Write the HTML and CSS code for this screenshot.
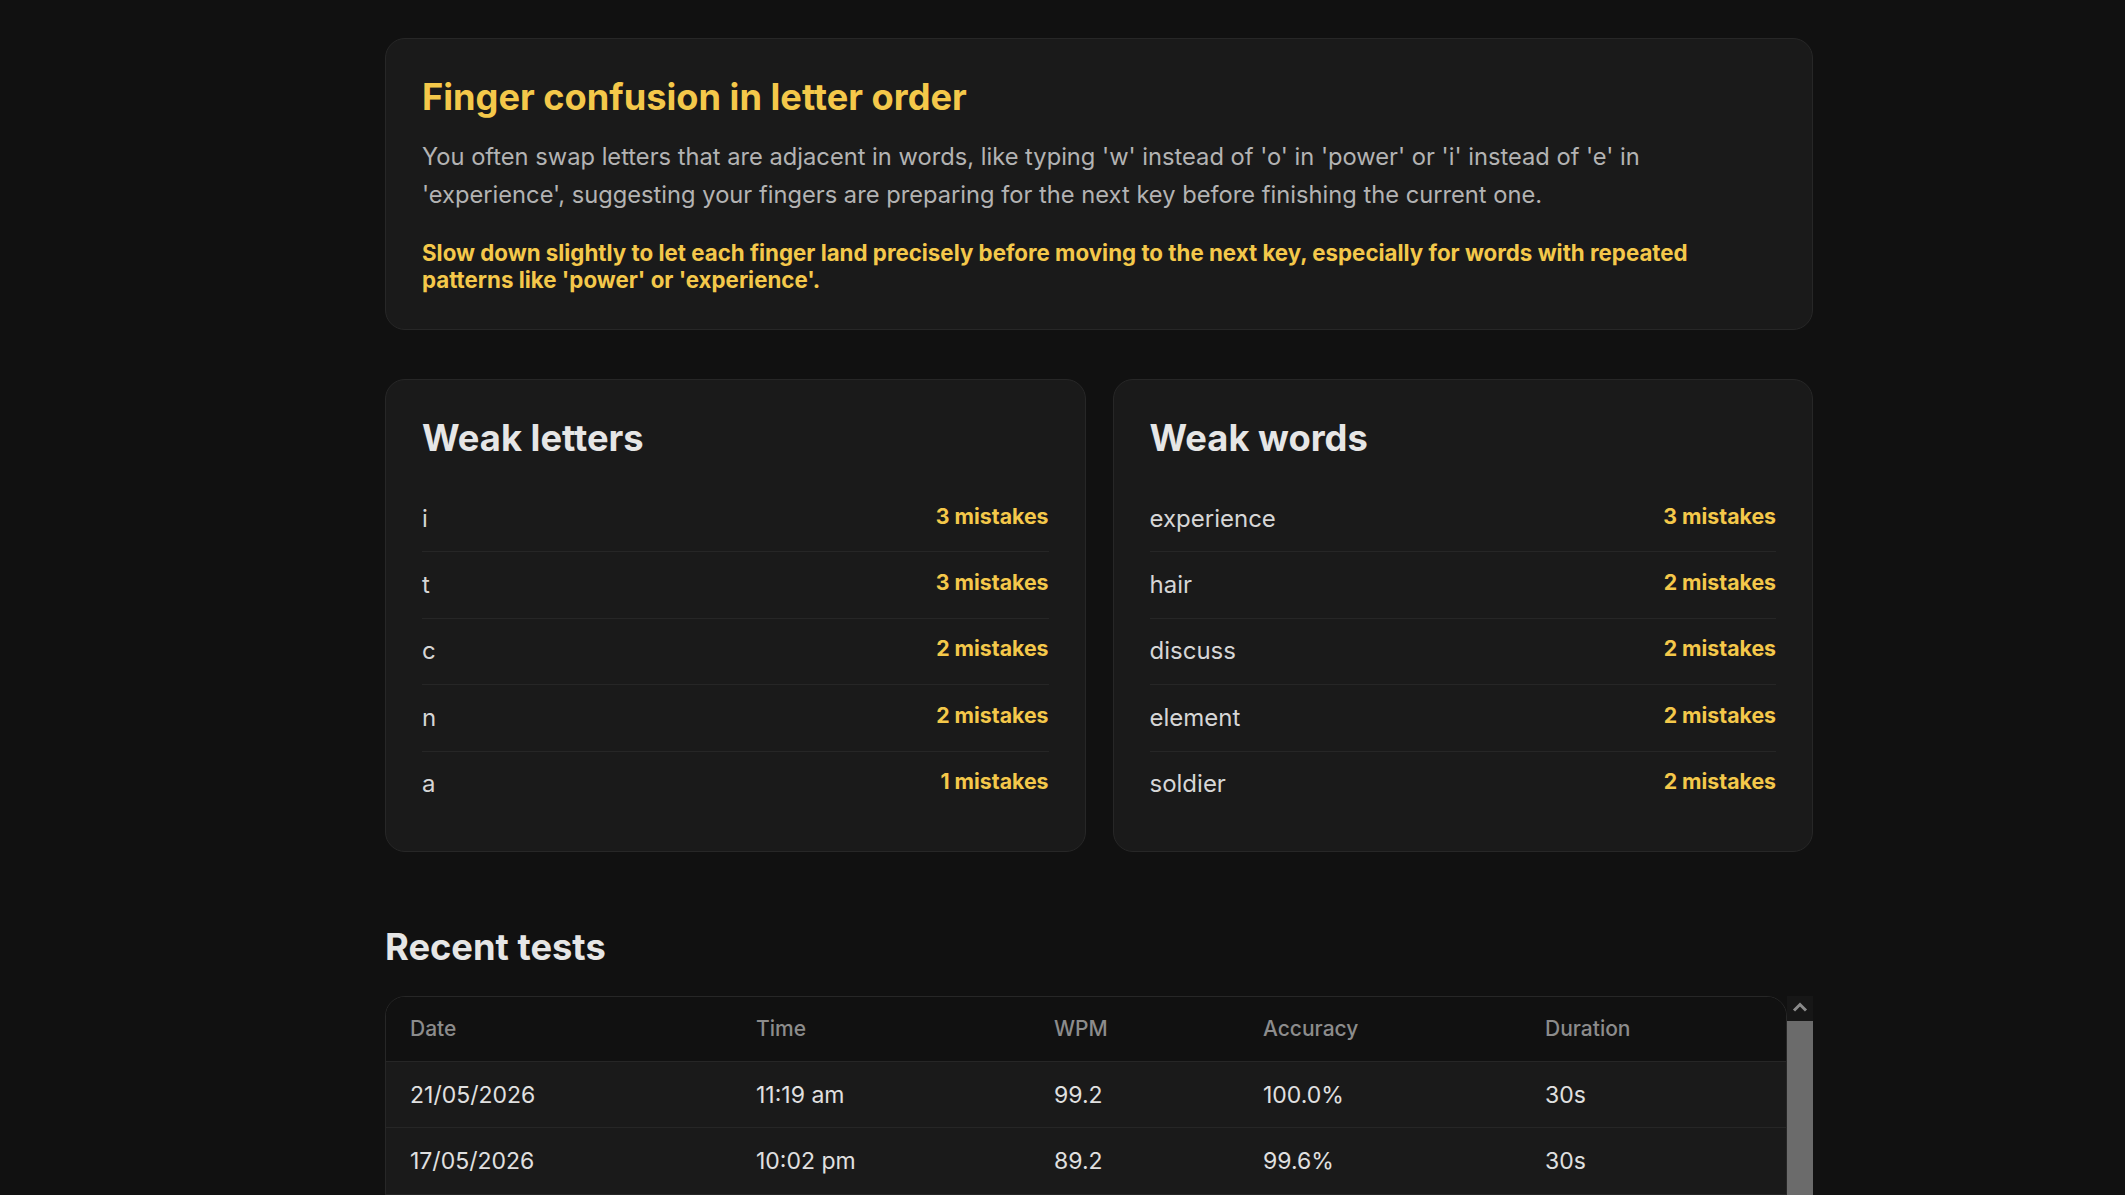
FILE: index.html
```html
<!DOCTYPE html>
<html lang="en">
<head>
    <meta charset="UTF-8">
    <meta name="viewport" content="width=device-width, initial-scale=1.0">
    <title>Typing Stats</title>
    <link rel="stylesheet" href="styles.css">
</head>
<body>
    <main class="page">
        <section class="card insight">
            <h2 class="insight-title">Finger confusion in letter order</h2>
            <p class="insight-text">You often swap letters that are adjacent in words, like typing 'w' instead of 'o' in 'power' or 'i' instead of 'e' in 'experience', suggesting your fingers are preparing for the next key before finishing the current one.</p>
            <p class="insight-tip">Slow down slightly to let each finger land precisely before moving to the next key, especially for words with repeated patterns like 'power' or 'experience'.</p>
        </section>

        <div class="weak-grid">
            <section class="card">
                <h3 class="card-title">Weak letters</h3>
                <ul class="weak-list">
                    <li><span>i</span><span class="count">3 mistakes</span></li>
                    <li><span>t</span><span class="count">3 mistakes</span></li>
                    <li><span>c</span><span class="count">2 mistakes</span></li>
                    <li><span>n</span><span class="count">2 mistakes</span></li>
                    <li><span>a</span><span class="count">1 mistakes</span></li>
                </ul>
            </section>
            <section class="card">
                <h3 class="card-title">Weak words</h3>
                <ul class="weak-list">
                    <li><span>experience</span><span class="count">3 mistakes</span></li>
                    <li><span>hair</span><span class="count">2 mistakes</span></li>
                    <li><span>discuss</span><span class="count">2 mistakes</span></li>
                    <li><span>element</span><span class="count">2 mistakes</span></li>
                    <li><span>soldier</span><span class="count">2 mistakes</span></li>
                </ul>
            </section>
        </div>

        <h3 class="section-title">Recent tests</h3>
        <div class="table-frame">
            <div class="table-scroll">
                <table class="tests">
                    <thead>
                        <tr>
                            <th>Date</th>
                            <th>Time</th>
                            <th>WPM</th>
                            <th>Accuracy</th>
                            <th>Duration</th>
                        </tr>
                    </thead>
                    <tbody>
                        <tr><td>21/05/2026</td><td>11:19 am</td><td>99.2</td><td>100.0%</td><td>30s</td></tr>
                        <tr><td>17/05/2026</td><td>10:02 pm</td><td>89.2</td><td>99.6%</td><td>30s</td></tr>
                        <tr><td>17/05/2026</td><td>9:48 pm</td><td>86.4</td><td>98.9%</td><td>30s</td></tr>
                        <tr><td>15/05/2026</td><td>8:31 pm</td><td>84.0</td><td>97.8%</td><td>30s</td></tr>
                        <tr><td>14/05/2026</td><td>7:12 am</td><td>81.6</td><td>98.2%</td><td>60s</td></tr>
                        <tr><td>12/05/2026</td><td>6:55 pm</td><td>79.8</td><td>96.5%</td><td>30s</td></tr>
                        <tr><td>10/05/2026</td><td>9:03 pm</td><td>77.1</td><td>97.0%</td><td>30s</td></tr>
                    </tbody>
                </table>
            </div>
            <div class="scrollbar" aria-hidden="true">
                <span class="scroll-up">
                    <svg width="26" height="25" viewBox="0 0 26 25"><path d="M7 14.5 L13 8.5 L19 14.5" fill="none" stroke="#8a8a8a" stroke-width="3"/></svg>
                </span>
                <span class="scroll-thumb"></span>
            </div>
        </div>
    </main>
</body>
</html>
```

FILE: styles.css
```css
/* Base */
* {
    margin: 0;
    padding: 0;
    box-sizing: border-box;
}

body {
    background-color: #111111;
    color: #e6e6e6;
    font-family: 'Inter', 'Noto Sans', sans-serif;
}

.page {
    width: 1428px;
    margin-left: 385px;
    padding: 38px 0 60px;
}

/* Cards */
.card {
    background-color: #1a1a1a;
    border: 1px solid #272727;
    border-radius: 20px;
    padding: 36px;
}

.insight-title {
    color: #f4c84a;
    font-size: 36.2px;
    font-weight: 700;
    line-height: 44px;
}

.insight-text {
    margin-top: 18.5px;
    color: #b3b3b3;
    font-size: 23.7px;
    line-height: 38px;
}

.insight-tip {
    margin-top: 25px;
    color: #f4c84a;
    font-size: 22.3px;
    font-weight: 700;
    line-height: 27px;
}

/* Weak letters / words */
.weak-grid {
    display: grid;
    grid-template-columns: 1fr 1fr;
    gap: 27px;
    margin-top: 49px;
}

.weak-grid .card {
    padding-bottom: 34px;
}

.card-title {
    font-size: 36.3px;
    font-weight: 700;
    line-height: 44px;
    color: #e6e6e6;
    margin-bottom: 26.5px;
}

.weak-list {
    list-style: none;
}

.weak-list li {
    display: flex;
    justify-content: space-between;
    padding: 14.7px 0;
    font-size: 24px;
    line-height: 36px;
    color: #d6d6d6;
    border-bottom: 1px solid #262626;
}

.weak-list li:last-child {
    border-bottom: none;
}

.weak-list .count {
    color: #f4c84a;
    font-size: 21.3px;
    font-weight: 700;
    line-height: 31px;
}

/* Recent tests */
.section-title {
    margin-top: 73px;
    font-size: 36.3px;
    font-weight: 700;
    line-height: 44px;
    color: #e6e6e6;
}

.table-frame {
    display: flex;
    margin-top: 27px;
    max-height: 470px;
}

.table-scroll {
    flex: 1;
    overflow: hidden;
}

.scrollbar {
    width: 26px;
    display: flex;
    flex-direction: column;
    background-color: #111111;
}

.scroll-up {
    display: flex;
    height: 25px;
    background-color: #171717;
}

.scroll-thumb {
    height: 300px;
    background-color: #6b6b6b;
}

.tests {
    width: 100%;
    border-collapse: separate;
    border-spacing: 0;
    border: 1px solid #272727;
    border-radius: 20px;
    overflow: hidden;
    table-layout: fixed;
    text-align: left;
}

.tests th:nth-child(1) { width: 346px; }
.tests th:nth-child(2) { width: 298px; }
.tests th:nth-child(3) { width: 209px; }
.tests th:nth-child(4) { width: 282px; }

.tests th {
    background-color: #111111;
    color: #8c8c8c;
    font-size: 21px;
    font-weight: 500;
    line-height: 32px;
    padding: 16px 24px;
    border-bottom: 1px solid #262626;
}

.tests td {
    background-color: #1a1a1a;
    color: #e0e0e0;
    font-size: 23px;
    line-height: 36px;
    padding: 14.7px 24px;
    border-bottom: 1px solid #262626;
}

.tests tr:last-child td {
    border-bottom: none;
}
```
